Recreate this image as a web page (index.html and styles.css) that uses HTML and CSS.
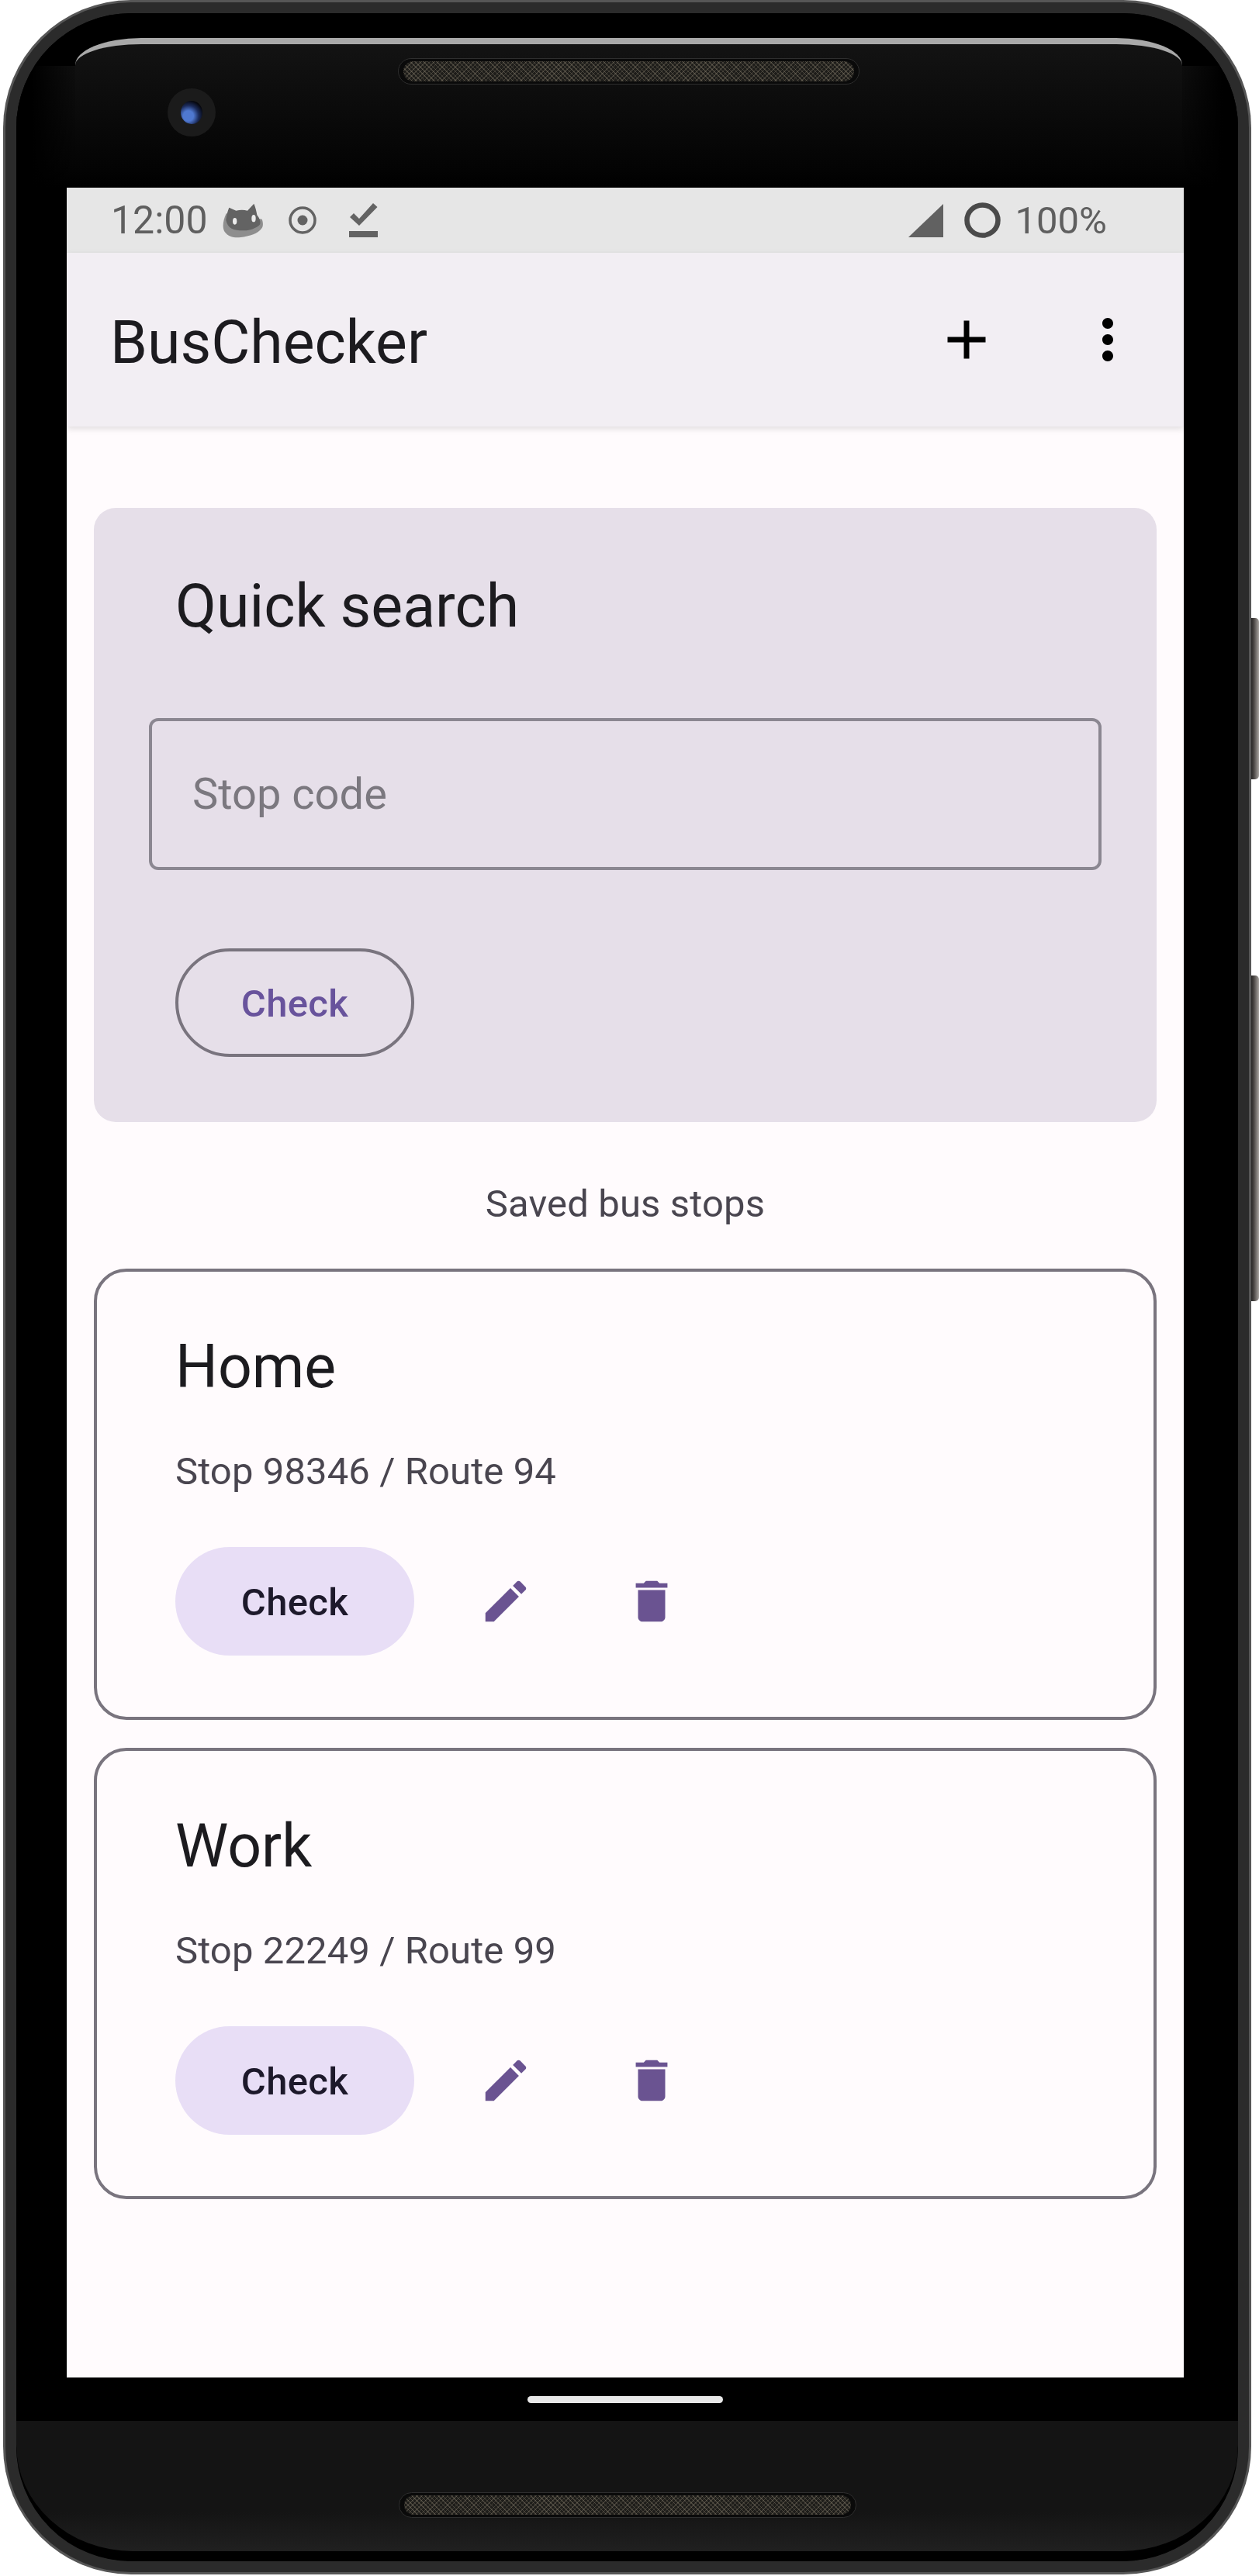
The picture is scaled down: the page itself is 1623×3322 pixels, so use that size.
FILE: index.html
```html
<!DOCTYPE html>
<html>

<head>
  <meta charset="utf-8">
  <title>BusChecker</title>
  <link rel="stylesheet" href="styles.css">
</head>

<body>
  <div class="device">
    <div class="side-button volume"></div>
    <div class="side-button power"></div>

    <div class="phone">
      <!-- Top bezel with speaker and camera -->
      <div class="top-bezel">
        <div class="glass">
          <div class="speaker"><div class="mesh"></div></div>
          <div class="camera"><div class="lens"></div></div>
        </div>
      </div>

      <div class="screen">
        <div class="status-bar">
          <div class="status-left">
            <span class="clock">12:00</span>
            <svg class="cat" viewBox="555 95 165 135">
              <path fill="#8e8e8e" d="M572 135C560 160 555 190 566 206c14 20 40 24 62 21 34-4 68-14 82-36 6-10 4-24 0-34z"/>
              <path fill="#636363" d="M571 160c2-18 6-34 12-48l27 12c16-4 30-4 44 0l25-27c6 14 10 30 12 44 10 12 14 24 12 34-2 8-30 26-66 26-36 0-60-8-66-41z"/>
              <ellipse fill="#ececec" cx="605" cy="165" rx="8" ry="13"/>
              <ellipse fill="#ececec" cx="678" cy="154" rx="8" ry="14"/>
            </svg>
            <svg class="dot-target" viewBox="0 0 36 36">
              <circle cx="18" cy="18" r="16" fill="none" stroke="#636363" stroke-width="3.5"/>
              <circle cx="18" cy="18" r="6.5" fill="#636363"/>
            </svg>
            <svg class="done-line" viewBox="0 0 37 44">
              <path fill="#636363" d="M13 29 1 18l5-5 7 7L31 0l5.500 5z"/>
              <rect x="0" y="36" width="37" height="8" fill="#636363"/>
            </svg>
          </div>
          <div class="status-right">
            <svg class="signal" viewBox="0 0 45 43"><path fill="#616161" d="M45 0v43H0z"/></svg>
            <svg class="battery-ring" viewBox="0 0 47 46">
              <ellipse cx="23.500" cy="23" rx="20" ry="19.500" fill="none" stroke="#4a4a4a" stroke-width="6.500"/>
            </svg>
            <span class="battery-text">100%</span>
          </div>
        </div>

        <div class="app-bar">
          <div class="app-title">BusChecker</div>
          <div class="app-actions">
            <svg class="action-icon" viewBox="0 0 24 24"><path d="M19 13h-6v6h-2v-6H5v-2h6V5h2v6h6v2z"/></svg>
            <svg class="action-icon" viewBox="0 0 24 24"><path d="M12 8c1.100 0 2-.9 2-2s-.9-2-2-2-2 .9-2 2 .9 2 2 2zm0 2c-1.100 0-2 .9-2 2s.9 2 2 2 2-.9 2-2-.9-2-2-2zm0 6c-1.100 0-2 .9-2 2s.9 2 2 2 2-.9 2-2-.9-2-2-2z"/></svg>
          </div>
        </div>

        <div class="content">
          <!-- Quick search card -->
          <div class="search-card">
            <div class="card-title">Quick search</div>
            <div class="stop-field">Stop code</div>
            <div class="btn btn-outlined">Check</div>
          </div>

          <div class="section-label">Saved bus stops</div>

          <!-- Saved stops -->
          <div class="stop-list">
            <div class="stop-card">
              <div class="card-title">Home</div>
              <div class="stop-info">Stop 98346 / Route 94</div>
              <div class="stop-actions">
                <div class="btn btn-tonal">Check</div>
                <div class="icon-btn">
                  <svg viewBox="0 0 24 24"><path d="M3 17.250V21h3.750L17.810 9.940l-3.750-3.750L3 17.250zM20.710 7.040c.39-.39.39-1.020 0-1.410l-2.340-2.340c-.39-.39-1.020-.39-1.410 0l-1.830 1.830 3.750 3.750 1.830-1.830z"/></svg>
                </div>
                <div class="icon-btn">
                  <svg viewBox="0 0 24 24"><path d="M6 19c0 1.100.9 2 2 2h8c1.100 0 2-.9 2-2V7H6v12zM19 4h-3.500l-1-1h-5l-1 1H5v2h14V4z"/></svg>
                </div>
              </div>
            </div>

            <div class="stop-card">
              <div class="card-title">Work</div>
              <div class="stop-info">Stop 22249 / Route 99</div>
              <div class="stop-actions">
                <div class="btn btn-tonal">Check</div>
                <div class="icon-btn">
                  <svg viewBox="0 0 24 24"><path d="M3 17.250V21h3.750L17.810 9.940l-3.750-3.750L3 17.250zM20.710 7.040c.39-.39.39-1.020 0-1.410l-2.340-2.340c-.39-.39-1.020-.39-1.410 0l-1.830 1.830 3.750 3.750 1.830-1.830z"/></svg>
                </div>
                <div class="icon-btn">
                  <svg viewBox="0 0 24 24"><path d="M6 19c0 1.100.9 2 2 2h8c1.100 0 2-.9 2-2V7H6v12zM19 4h-3.500l-1-1h-5l-1 1H5v2h14V4z"/></svg>
                </div>
              </div>
            </div>
          </div>
        </div>

        <div class="nav-bar"><div class="nav-handle"></div></div>
      </div>

      <!-- Bottom bezel with speaker -->
      <div class="bottom-bezel">
        <div class="speaker speaker-bottom"><div class="mesh"></div></div>
      </div>
    </div>
  </div>
</body>

</html>
```

FILE: styles.css
```css
* {
  box-sizing: border-box;
}

body {
  margin: 0;
  background-color: white;
  font-family: Roboto, "Liberation Sans", sans-serif;
}

/* Device frame */
.device {
  position: relative;
  width: 1623px;
  height: 3322px;
  padding: 3px 0 0 7px;
}

.phone {
  position: relative;
  width: 1603px;
  height: 3314px;
  border: 14px solid #2b2b2b;
  border-radius: 162px;
  background-color: black;
  overflow: hidden;
  box-shadow: 0 0 0 3px #565656;
}

.side-button {
  position: absolute;
  left: 1612px;
  width: 11px;
  border-radius: 0 5px 5px 0;
  background: linear-gradient(to right, #1c1c1c, #4a4644 40%, #a8a4a0);
}

.volume {
  top: 797px;
  height: 208px;
}

.power {
  top: 1258px;
  height: 420px;
}

.top-bezel {
  height: 225px;
  padding: 32px 72px 0 76px;
  background:
    linear-gradient(to right, black 20px, transparent 76px, transparent 1499px, black 1555px),
    linear-gradient(to bottom, black 68px, #0e0e0e 68px, #040404 195px, black 225px);
}

.glass {
  position: relative;
  height: 163px;
  padding-top: 18px;
  border-top: 8px solid #a9a9a9;
  border-radius: 85px 85px 0 0 / 35px 35px 0 0;
  background: linear-gradient(to bottom, #131313, #040404);
}

.speaker {
  width: 595px;
  height: 34px;
  margin: 0 auto;
  padding: 3px 6px;
  border: 1px solid #2e2e2e;
  border-radius: 17px;
  background-color: #0a0a0a;
}

.mesh {
  height: 100%;
  border-radius: 13px;
  background-color: #1e1d1a;
  background-image:
    repeating-linear-gradient(45deg, rgba(150, 140, 120, 0.35) 0 1px, transparent 1px 4px),
    repeating-linear-gradient(-45deg, rgba(150, 140, 120, 0.3) 0 1px, transparent 1px 4px);
}

.camera {
  position: absolute;
  left: 119px;
  top: 57px;
  width: 62px;
  height: 62px;
  padding: 16px 15px 16px 17px;
  border-radius: 50%;
  background-color: #1b1b1b;
}

.lens {
  width: 28px;
  height: 30px;
  border-radius: 50%;
  background: radial-gradient(circle at 35% 65%, #4f78d0 0 25%, #1c2c5c 50%, #05060c 75%);
}

/* Android screen */
.screen {
  display: flex;
  flex-direction: column;
  width: 1440px;
  height: 2880px;
  margin-left: 65px;
  background-color: #fffbfd;
}

.status-bar {
  display: flex;
  justify-content: space-between;
  align-items: center;
  height: 84px;
  padding: 0 99px 0 57px;
  background-color: #e6e6e6;
  color: #5f5f5f;
  font-size: 50px;
}

.status-left,
.status-right {
  display: flex;
  align-items: center;
}

.clock {
  width: 143px;
}

.cat {
  width: 55px;
  height: 45px;
  margin-right: 31px;
}

.dot-target {
  width: 36px;
  height: 36px;
  margin-right: 42px;
}

.done-line {
  width: 37px;
  height: 44px;
}

.signal {
  width: 45px;
  height: 43px;
  margin-right: 27px;
}

.battery-ring {
  width: 47px;
  height: 46px;
  margin-right: 18px;
}

.battery-text {
  font-size: 49px;
}

.app-bar {
  position: relative;
  display: flex;
  justify-content: space-between;
  align-items: center;
  height: 224px;
  padding: 0 14px 0 56px;
  background-color: #f2eef3;
  box-shadow: 0 3px 8px rgba(0, 0, 0, 0.12);
}

.app-title {
  padding-top: 8px;
  color: #1c1b1f;
  font-size: 77px;
}

.app-actions {
  display: flex;
  gap: 14px;
}

.action-icon {
  width: 168px;
  height: 84px;
}

.content {
  flex: 1;
  padding: 105px 35px 0;
}

.card-title {
  color: #1c1b1f;
  font-size: 77px;
  line-height: 98px;
}

.search-card {
  height: 792px;
  padding: 78px 71px 0;
  border-radius: 28px;
  background-color: #e6dfe9;
}

.search-card .card-title,
.search-card .btn {
  margin-left: 34px;
}

.stop-field {
  display: flex;
  align-items: center;
  height: 196px;
  margin-top: 95px;
  padding-left: 52px;
  border: 4px solid #8b8791;
  border-radius: 12px;
  color: #7b787f;
  font-size: 56px;
}

.btn {
  display: flex;
  justify-content: center;
  align-items: center;
  width: 308px;
  height: 140px;
  padding-top: 2px;
  border-radius: 70px;
  font-size: 49px;
  font-weight: 500;
  letter-spacing: 0.35px;
}

.btn-outlined {
  margin-top: 101px;
  padding-top: 3px;
  border: 4px solid #79747e;
  color: #68539c;
}

.btn-tonal {
  background-color: #e8def6;
  color: #1d192b;
}

.section-label {
  height: 70px;
  margin: 71px 0 48px;
  color: #49454f;
  font-size: 49px;
  line-height: 70px;
  text-align: center;
  letter-spacing: 0.15px;
}

.stop-list {
  display: flex;
  flex-direction: column;
  gap: 36px;
}

.stop-card {
  height: 582px;
  padding: 74px 101px 0;
  border: 4px solid #79747e;
  border-radius: 42px;
  background-color: #fffbfd;
}

.stop-info {
  margin-top: 51px;
  color: #49454f;
  font-size: 49px;
  line-height: 70px;
  letter-spacing: 0.1px;
}

.stop-actions {
  display: flex;
  align-items: center;
  gap: 48px;
  margin-top: 62px;
}

.icon-btn {
  display: flex;
  justify-content: center;
  align-items: center;
  width: 140px;
  height: 140px;
}

.icon-btn svg {
  width: 70px;
  height: 70px;
  fill: #6a5391;
}

.nav-bar {
  display: flex;
  justify-content: center;
  align-items: center;
  height: 56px;
  background-color: black;
}

.nav-handle {
  width: 252px;
  height: 9px;
  border-radius: 5px;
  background-color: #e8e8e8;
}

.bottom-bezel {
  height: 181px;
  padding-top: 92px;
  border-bottom: 13px solid black;
  border-radius: 0 0 150px 150px;
  background: linear-gradient(to bottom, #141414 70%, #202020);
}

.speaker-bottom {
  width: 590px;
  height: 33px;
}
```
